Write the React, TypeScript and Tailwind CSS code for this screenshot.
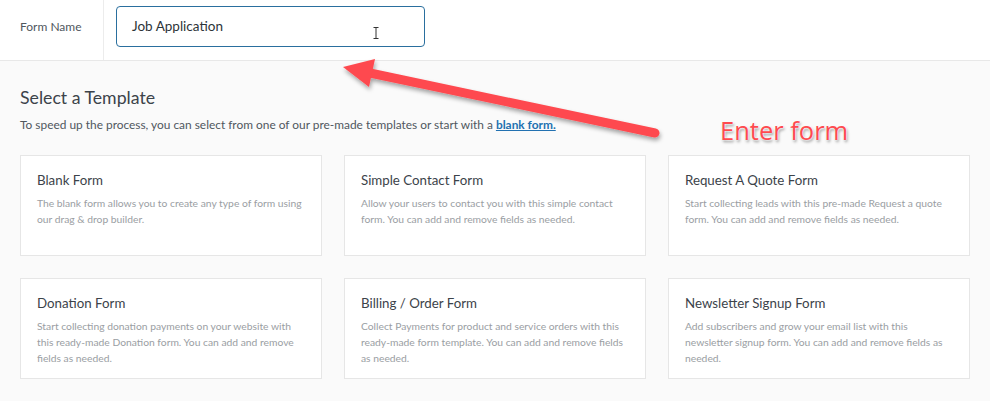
import React from 'react';

const TEMPLATES = [
  {
    title: 'Blank Form',
    desc: 'The blank form allows you to create any type of form using our drag & drop builder.',
  },
  {
    title: 'Simple Contact Form',
    desc: 'Allow your users to contact you with this simple contact form. You can add and remove fields as needed.',
  },
  {
    title: 'Request A Quote Form',
    desc: 'Start collecting leads with this pre-made Request a quote form. You can add and remove fields as needed.',
  },
  {
    title: 'Donation Form',
    desc: 'Start collecting donation payments on your website with this ready-made Donation form. You can add and remove fields as needed.',
  },
  {
    title: 'Billing / Order Form',
    desc: 'Collect Payments for product and service orders with this ready-made form template. You can add and remove fields as needed.',
  },
  {
    title: 'Newsletter Signup Form',
    desc: 'Add subscribers and grow your email list with this newsletter signup form. You can add and remove fields as needed.',
  },
];

function Arrow() {
  // annotation overlay drawn on top of the screenshot
  return (
    <svg className="pointer-events-none absolute left-0 top-0" width="990" height="401" viewBox="0 0 990 401">
      <defs>
        <filter id="sh" x="-10%" y="-50%" width="120%" height="200%">
          <feDropShadow dx="1" dy="3" stdDeviation="2" floodColor="#000" floodOpacity="0.35" />
        </filter>
      </defs>
      <g filter="url(#sh)">
        <line x1="370" y1="73" x2="655" y2="133" stroke="#fe4a4f" strokeWidth="9" strokeLinecap="round" />
        <polygon points="343,67 375,59 369,87" fill="#fe4a4f" />
      </g>
    </svg>
  );
}

export default function App() {
  return (
    <div className="relative h-[401px] w-[990px] overflow-hidden bg-[#fafafa] font-['Lato','Open_Sans',sans-serif]">
      {/* Form name bar */}
      <div className="flex h-[61px] border-b border-[#e8e8e8] bg-white">
        <div className="flex w-[104px] shrink-0 items-center border-r border-[#ececec] pb-[6px] pl-5 text-[12px] text-[#50575e]">
          Form Name
        </div>
        <div className="pl-3 pt-[6px]">
          <div className="relative flex h-[41px] w-[309px] items-center rounded-[4px] border-[1.5px] border-[#2a6f9e] bg-white pl-[15px] text-[13.5px] text-[#2c3338]">
            Job Application
            <svg className="absolute left-[256px] top-[20px]" width="6" height="12" viewBox="0 0 6 12">
              <path d="M0.5 0.5h5M3 0.5v11M0.5 11.5h5" stroke="#333" strokeWidth="1" fill="none" />
            </svg>
          </div>
        </div>
      </div>

      {/* Templates */}
      <div className="px-5 pt-[25px]">
        <h2 className="text-[17.7px] leading-6 text-[#3c434a]">Select a Template</h2>
        <p className="mt-[6px] text-[11.9px] leading-[18px] text-[#50575e]">
          To speed up the process, you can select from one of our pre-made templates or start with a{' '}
          <a className="font-bold text-[#2271b1] underline">blank form.</a>
        </p>

        <div className="mt-[21px] grid w-[950px] grid-cols-3 gap-[22px]">
          {TEMPLATES.map((t) => (
            <div key={t.title} className="h-[101px] border border-[#e6e6e6] bg-white px-4 pt-[15px]">
              <h3 className="text-[13.3px] leading-[19px] text-[#3c434a]">{t.title}</h3>
              <p className="mt-[5px] text-[10.3px] leading-[16px] text-[#9a9ea3]">{t.desc}</p>
            </div>
          ))}
        </div>
      </div>

      <Arrow />
      <div className="pointer-events-none absolute left-[720px] top-[113px] font-['Open_Sans',sans-serif] text-[25.5px] leading-[34px] text-[#fe4a4f] [text-shadow:0_0_2px_#fff,0_0_2px_#fff,1px_2px_3px_rgba(0,0,0,0.45)]">
        Enter form
      </div>
    </div>
  );
}
